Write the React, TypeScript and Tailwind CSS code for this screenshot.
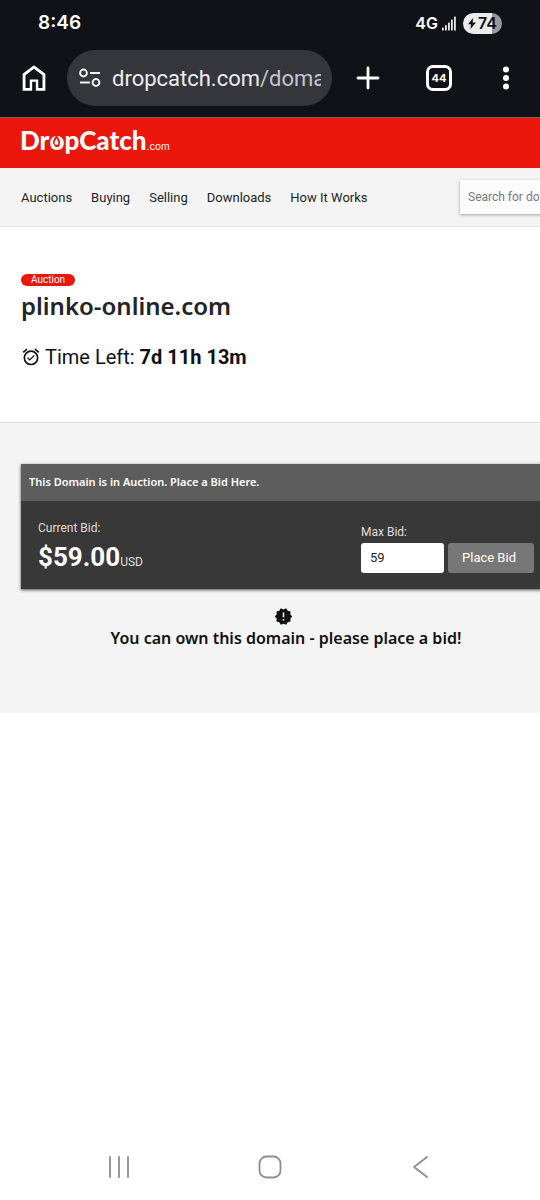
import React, { useState } from "react";

const navLinks = ["Auctions", "Buying", "Selling", "Downloads", "How It Works"];

function StatusBar() {
  return (
    <div className="flex h-[46px] items-center justify-between pr-[38px] pl-[38px] text-white">
      <span className="font-['Inter',sans-serif] text-[19px] leading-6 font-semibold">8:46</span>
      <div className="flex items-center">
        <span className="font-['Inter',sans-serif] text-[16px] leading-6 font-semibold">4G</span>
        <svg className="ml-1 h-[15px] w-[14px]" viewBox="0 0 14 15" fill="#e8e8ea" aria-hidden="true">
          <rect x="0" y="11.5" width="1.8" height="3" rx=".6" />
          <rect x="3" y="9" width="1.8" height="5.5" rx=".6" />
          <rect x="6" y="6.5" width="1.8" height="8" rx=".6" />
          <rect x="9" y="3.5" width="1.8" height="11" rx=".6" />
          <rect x="12" y="0.5" width="1.8" height="14" rx=".6" />
        </svg>
        <div className="ml-[7px] flex h-[21px] w-[39px] items-center rounded-full bg-linear-to-r from-[#ececee] from-75% to-[#98989b] to-75% pl-[5px] text-[#111217]">
          <svg className="h-[11px] w-[8px]" viewBox="0 0 8 11" aria-hidden="true">
            <path d="M5.2 0 0 6.2h3L2.400 11 8 4.500H4.600z" fill="currentColor" />
          </svg>
          <span className="ml-[2px] font-['Inter',sans-serif] text-[16px] leading-5 font-semibold">74</span>
        </div>
      </div>
    </div>
  );
}

function BrowserBar() {
  return (
    <div className="flex h-[71px] items-start pr-6 pl-[17px] text-white">
      <button type="button" aria-label="Home" className="mt-[15px]">
        <svg className="size-[34px]" viewBox="0 0 24 24" fill="currentColor">
          <path d="M6 19h3v-6h6v6h3v-9l-6-4.5L6 10v9Zm-2 2V9l8-6 8 6v12h-6.7v-6.3h-2.6V21H4Z" />
        </svg>
      </button>
      <div className="mt-1 ml-4 flex h-14 min-w-0 flex-1 items-center rounded-full bg-[#35363b] pr-[11px] pl-3">
        <svg className="h-5 w-[22px] shrink-0" viewBox="0 0 22 20" fill="none" stroke="#f1f1f4" strokeWidth="2" aria-hidden="true">
          <circle cx="4.5" cy="5" r="3.400" />
          <path d="M11 5h10M1 14.5h10" />
          <circle cx="17" cy="14.5" r="3.400" />
        </svg>
        <div className="mt-[2px] ml-[11px] min-w-0 overflow-hidden font-['Roboto',sans-serif] text-[22px] leading-8 whitespace-nowrap text-[#c5c6d0]">
          <span className="text-[#ececf2]">dropcatch.com</span>/doma
        </div>
      </div>
      <button type="button" aria-label="New tab" className="mt-[18px] ml-[22px]">
        <svg className="size-7" viewBox="0 0 28 28" stroke="currentColor" strokeWidth="2.8" strokeLinecap="round">
          <path d="M14 4v20M4 14h20" />
        </svg>
      </button>
      <button
        type="button"
        aria-label="44 open tabs"
        className="mt-[19px] ml-11 flex size-[26px] items-center justify-center rounded-[7px] border-[3px] border-white font-['Inter',sans-serif] text-[11px] font-bold"
      >
        44
      </button>
      <button type="button" aria-label="More options" className="mt-[18px] ml-11">
        <svg className="h-7 w-5" viewBox="0 0 20 28" fill="currentColor">
          <circle cx="10" cy="5.5" r="3" />
          <circle cx="10" cy="14" r="3" />
          <circle cx="10" cy="22.5" r="3" />
        </svg>
      </button>
    </div>
  );
}

function Logo() {
  return (
    <a href="#" className="flex items-baseline text-white">
      <span className="font-['Lato',sans-serif] text-[26px] leading-8 font-black">
        Dr
        <span className="relative inline-block">
          o
          <svg className="absolute top-[11px] left-[2px] h-[13px] w-[11px]" viewBox="0 0 11 13" aria-hidden="true">
            <path d="M5.5 0C7 2 9 5 9 7.8a3.6 3.6 0 0 1-7 0C2 5 4 2 5.5 0Z" fill="#eb160c" />
            <path d="M5.5 3.2C6.3 4.8 7.4 6.400 7.4 7.9a1.9 1.9 0 0 1-3.8 0C3.6 6.400 4.7 4.8 5.5 3.2Z" fill="#fff" />
          </svg>
        </span>
        pCatch
      </span>
      <span className="font-['Inter',sans-serif] text-[10px] leading-4">.com</span>
    </a>
  );
}

function AlarmIcon() {
  return (
    <svg className="size-5" viewBox="0 0 24 24" fill="currentColor" aria-hidden="true">
      <path d="m22 5.7-4.6-3.9-1.3 1.5 4.6 3.9L22 5.7zM7.9 3.4 6.6 1.9 2 5.7l1.3 1.5 4.6-3.8zM12 4a9 9 0 1 0 0 18 9 9 0 0 0 0-18zm0 16a7 7 0 1 1 0-14 7 7 0 0 1 0 14zm-1.46-5.47L8.41 12.4l-1.06 1.06 3.18 3.18 6-6-1.06-1.06-4.93 4.95z" />
    </svg>
  );
}

function NewReleasesIcon() {
  return (
    <svg className="mr-[5px] size-[19px]" viewBox="0 0 24 24" fill="currentColor" aria-hidden="true">
      <path d="m23 12-2.44-2.78.34-3.68-3.61-.82-1.89-3.18L12 3 8.6 1.54 6.71 4.72l-3.61.81.34 3.68L1 12l2.44 2.78-.34 3.69 3.61.82 1.89 3.18L12 21l3.4 1.46 1.89-3.18 3.61-.82-.34-3.68L23 12zm-10 5h-2v-2h2v2zm0-4h-2V7h2v6z" />
    </svg>
  );
}

function BidPanel() {
  const [bid, setBid] = useState("59");
  return (
    <div className="bg-[#383838] text-white shadow-[0_1px_3px_rgba(0,0,0,0.7)]">
      <h2 className="bg-[#5d5d5d] px-2 pt-2 pb-[9px] font-['Noto_Sans',sans-serif] text-[11px] leading-5 font-semibold">
        This Domain is in Auction. Place a Bid Here.
      </h2>
      <form className="flex justify-between px-[17px] pt-[17px] pb-4" onSubmit={(e) => e.preventDefault()}>
        <div>
          <div className="text-[12px] leading-5 text-[#dedede]">Current Bid:</div>
          <div className="mt-[3px] flex items-baseline">
            <span className="text-[26px] leading-8 font-bold">$59.00</span>
            <span className="text-[12px] leading-4 text-[#dedede]">USD</span>
          </div>
        </div>
        <div className="pt-1">
          <label htmlFor="max-bid" className="block text-[12px] leading-5 text-[#dedede]">
            Max Bid:
          </label>
          <div className="mt-px flex gap-1">
            <input
              id="max-bid"
              value={bid}
              onChange={(e) => setBid(e.target.value)}
              className="h-[30px] w-[83px] rounded-[3px] bg-white px-[9px] pb-px text-[13px] text-[#212529]"
            />
            <button type="submit" className="h-[30px] w-[86px] rounded-[3px] bg-[#777777] pr-1 pb-px text-[13px]">
              Place Bid
            </button>
          </div>
        </div>
      </form>
    </div>
  );
}

export default function App() {
  return (
    <div className="flex min-h-screen flex-col overflow-hidden bg-white font-['Roboto',sans-serif] text-[#212529]">
      <div className="border-b border-[#8a5f63] bg-[#111217]">
        <StatusBar />
        <BrowserBar />
      </div>

      <header>
        <div className="flex h-[50px] items-center bg-[#eb160c] px-5 pb-[6px]">
          <Logo />
        </div>
        <div className="-mr-[11px] flex h-[59px] items-center justify-between border-b border-[#e4e4e4] bg-[#f4f4f4] pl-[21px]">
          <nav className="flex gap-[19px] pt-[2px] text-[13px] leading-5 whitespace-nowrap">
            {navLinks.map((label) => (
              <a key={label} href="#">
                {label}
              </a>
            ))}
          </nav>
          <input
            type="search"
            aria-label="Search for domains"
            placeholder="Search for domains"
            className="h-[34px] w-[91px] shrink-0 bg-[#fcfcfc] pl-2 text-[12px] shadow-[0_1px_3px_rgba(0,0,0,0.35)] placeholder:text-[#77797c]"
          />
        </div>
      </header>

      <main className="grow">
        <section className="border-b border-[#e2e2e2] px-[21px] pt-[47px] pb-[51px]">
          <div className="flex">
            <span className="rounded-full bg-[#eb160c] px-[10px] text-[10px] leading-3 text-white">Auction</span>
          </div>
          <h1 className="font-['Noto_Sans',sans-serif] text-[24px] leading-10 font-semibold">plinko-online.com</h1>
          <p className="mt-[17px] flex items-center gap-1 text-[20px] leading-7 text-[#111111]">
            <AlarmIcon />
            <span>
              Time Left: <strong className="font-bold">7d 11h 13m</strong>
            </span>
          </p>
        </section>

        <section className="-mr-[11px] bg-[#f4f4f4] pt-[41px] pb-[63px] pl-[21px]">
          <BidPanel />
          <div className="mt-[18px] flex flex-col items-center text-[#111111]">
            <NewReleasesIcon />
            <p className="font-['Noto_Sans',sans-serif] text-[16px] leading-6 font-semibold">
              You can own this domain - please place a bid!
            </p>
          </div>
        </section>
      </main>

      <footer className="flex h-[66px] items-center justify-around px-11 text-[#8e8e8e]">
        <button type="button" aria-label="Recent apps">
          <svg className="h-6 w-6" viewBox="0 0 24 24" stroke="currentColor" strokeWidth="1.8" strokeLinecap="round">
            <path d="M3 2v20M12 2v20M21 2v20" />
          </svg>
        </button>
        <button type="button" aria-label="Home screen">
          <svg className="h-6 w-6" viewBox="0 0 24 24" fill="none" stroke="currentColor" strokeWidth="1.8">
            <rect x="1.5" y="1.5" width="21" height="21" rx="7" />
          </svg>
        </button>
        <button type="button" aria-label="Back">
          <svg className="h-6 w-6" viewBox="0 0 24 24" fill="none" stroke="currentColor" strokeWidth="1.8" strokeLinecap="round" strokeLinejoin="round">
            <path d="M18 2 5 12l13 10" />
          </svg>
        </button>
      </footer>
    </div>
  );
}
